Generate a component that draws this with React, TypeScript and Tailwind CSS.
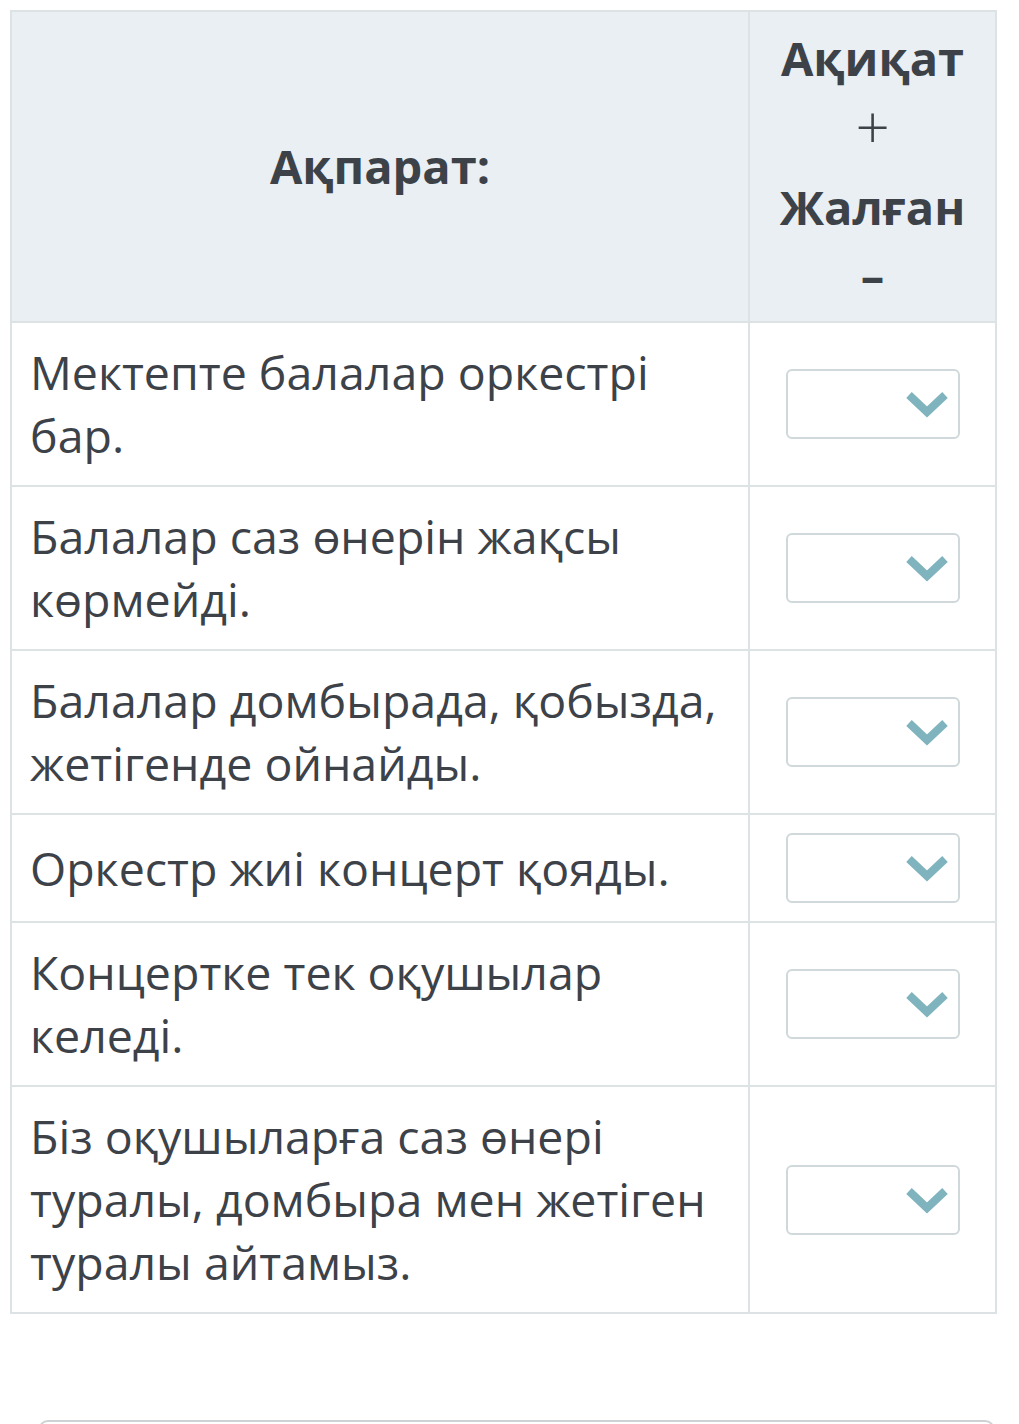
const rows = [
  "Мектепте балалар оркестрі бар.",
  "Балалар саз өнерін жақсы көрмейді.",
  "Балалар домбырада, қобызда, жетігенде ойнайды.",
  "Оркестр жиі концерт қояды.",
  "Концертке тек оқушылар келеді.",
  "Біз оқушыларға саз өнері туралы, домбыра мен жетіген туралы айтамыз.",
];

function Select() {
  return (
    <div className="mx-auto flex h-[70px] w-[174px] items-center justify-end rounded-md border-2 border-[#cfd8db] bg-white pr-[8px]">
      <svg width="46" height="28" viewBox="0 0 46 28" className="text-[#7fb3be]">
        <path d="M5 5 L23 22 L41 5" fill="none" stroke="currentColor" strokeWidth="8" strokeLinejoin="miter" />
      </svg>
    </div>
  );
}

export default function App() {
  return (
    <div className="min-h-[1424px] bg-white pt-[10px] pl-[10px] font-['Open_Sans',sans-serif] text-[#3d4249]">
      <table className="w-[985px] table-fixed border-collapse">
        <colgroup>
          <col className="w-[738px]" />
          <col className="w-[247px]" />
        </colgroup>
        <thead>
          <tr className="bg-[#e9eff3]">
            <th className="h-[311px] border-2 border-[#dde2e4] text-center align-middle text-[47px] font-bold leading-[63px]">
              Ақпарат:
            </th>
            <th className="border-2 border-[#dde2e4] px-2 text-center align-middle text-[47px] font-bold leading-[68px]">
              <p>Ақиқат</p>
              <p className="text-[60px] font-light">+</p>
              <p className="mt-[13px]">Жалған</p>
              <p>–</p>
            </th>
          </tr>
        </thead>
        <tbody>
          {rows.map((text) => (
            <tr key={text}>
              <td className="border-2 border-[#dde2e4] pl-[18px] pr-[16px] py-[18px] align-middle text-[46.5px] leading-[63px]">
                {text}
              </td>
              <td className="border-2 border-[#dde2e4] py-[18px] align-middle">
                <Select />
              </td>
            </tr>
          ))}
        </tbody>
      </table>
      <div className="mt-[106px] ml-[28px] h-[10px] w-[957px] rounded-t-xl border-t-2 border-x-2 border-[#cfd2d4]" />
    </div>
  );
}
